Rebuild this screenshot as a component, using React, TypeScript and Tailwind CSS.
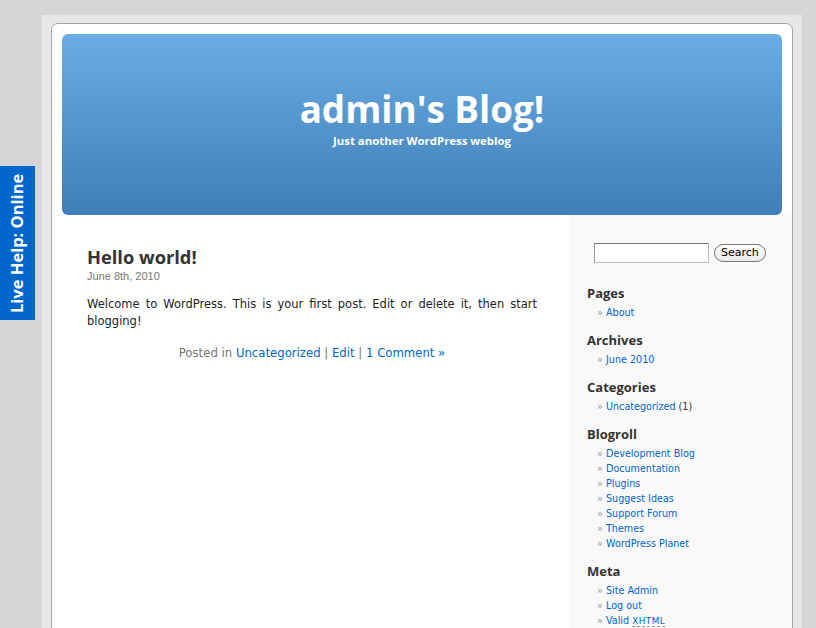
import React from "react";

const body = { fontFamily: '"DejaVu Sans", Verdana, sans-serif' };
const head = { fontFamily: '"Open Sans", "DejaVu Sans", sans-serif' };

function Side({ title, items }: { title: string; items: React.ReactNode[] }) {
  return (
    <div className="mb-[12px]">
      <h2 className="text-[13px] leading-[17px] font-bold text-[#333] mb-[3px]" style={head}>
        {title}
      </h2>
      <ul className="pl-[10px]">
        {items.map((it, i) => (
          <li key={i} className="text-[9.6px] leading-[15px] flex">
            <span className="text-[#999] w-[9px]">»</span>
            <span>{it}</span>
          </li>
        ))}
      </ul>
    </div>
  );
}

const L = ({ children }: { children: React.ReactNode }) => (
  <a className="text-[#0066cc]" href="#">
    {children}
  </a>
);

export default function App() {
  return (
    <div className="min-h-screen bg-[#d5d6d7] pt-[15px] relative" style={body}>
      <div className="absolute left-0 top-[166px] w-[35px] h-[154px] bg-[#0066cc] flex items-center justify-center z-10">
        <span className="-rotate-90 whitespace-nowrap text-white font-bold text-[16.5px]" style={head}>
          Live Help: Online
        </span>
      </div>
      <div className="ml-[42px] w-[760px] bg-[#e7e7e7] pt-[8px] px-[9px] h-[800px]">
        <div className="bg-white border border-[#a3a3a3] rounded-t-[7px] h-[800px]">
          <div className="pt-[10px] px-[10px]">
            <div className="h-[181px] rounded-[6px] bg-gradient-to-b from-[#6aade5] to-[#3f7eb6] flex flex-col items-center text-white">
              <h1 className="mt-[54px] text-[36.8px] leading-[42px] font-bold" style={head}>
                admin's Blog!
              </h1>
              <div className="text-[11.4px] leading-[14px] font-bold mt-[4px]" style={head}>
                Just another WordPress weblog
              </div>
            </div>
          </div>
          <div className="flex">
            <div className="w-[517px] pl-[35px] pr-[32px] pt-[30px]">
              <h2 className="text-[18.3px] leading-[24px] font-bold text-[#333]" style={head}>
                Hello world!
              </h2>
              <div className="text-[11px] leading-[13px] text-[#777] mt-[1px]" style={{ fontFamily: '"Liberation Sans", Arial, sans-serif' }}>
                June 8th, 2010
              </div>
              <p className="mt-[13px] text-[11.5px] leading-[17px] text-[#222] text-justify">
                Welcome to WordPress. This is your first post. Edit or delete it, then start blogging!
              </p>
              <p className="mt-[15px] text-[11.7px] leading-[17px] text-[#777] text-center">
                Posted in <L>Uncategorized</L> | <L>Edit</L> | <L>1 Comment »</L>
              </p>
            </div>
            <div className="flex-1 bg-[#f9f9f9] pl-[18px] pt-[28px] h-[600px]">
              <div className="flex items-center ml-[7px] mb-[22px]">
                <input
                  className="w-[115px] h-[20px] bg-white border border-[#bbb] border-t-[#777] border-l-[#999]"
                  type="text"
                />
                <button
                  className="ml-[5px] h-[18px] px-[6px] rounded-full border border-[#777] bg-gradient-to-b from-white to-[#e8e8e8] text-[11px] leading-[14px] text-black"
                  style={body}
                >
                  Search
                </button>
              </div>
              <Side title="Pages" items={[<L>About</L>]} />
              <Side title="Archives" items={[<L>June 2010</L>]} />
              <Side
                title="Categories"
                items={[
                  <>
                    <L>Uncategorized</L> <span className="text-[#333]">(1)</span>
                  </>,
                ]}
              />
              <Side
                title="Blogroll"
                items={[
                  <L>Development Blog</L>,
                  <L>Documentation</L>,
                  <L>Plugins</L>,
                  <L>Suggest Ideas</L>,
                  <L>Support Forum</L>,
                  <L>Themes</L>,
                  <L>WordPress Planet</L>,
                ]}
              />
              <Side
                title="Meta"
                items={[
                  <L>Site Admin</L>,
                  <L>Log out</L>,
                  <L>
                    Valid{" "}
                    <abbr className="border-b border-dashed border-[#999] no-underline text-[8.8px] tracking-[0.5px]">XHTML</abbr>
                  </L>,
                  <L>XFN</L>,
                  <L>WordPress</L>,
                ]}
              />
            </div>
          </div>
        </div>
      </div>
    </div>
  );
}
